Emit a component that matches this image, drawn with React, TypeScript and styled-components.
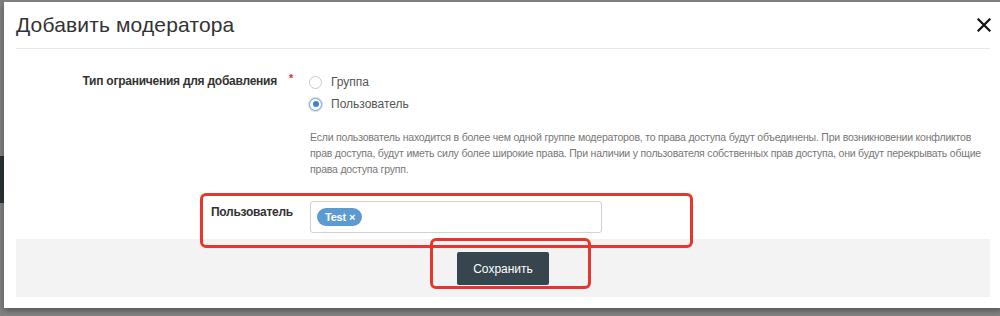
import React from "react";
import styled, { createGlobalStyle } from "styled-components";

const Global = createGlobalStyle`
  html, body { margin: 0; padding: 0; }
  body {
    width: 1000px;
    height: 316px;
    overflow: hidden;
    background: #848484;
    font-family: "Liberation Sans", Arial, sans-serif;
  }
`;

const Backdrop = styled.div`
  display: flex;
  width: 1000px;
  height: 316px;
  overflow: hidden;
`;

const PageEdge = styled.div`
  flex: 0 0 4px;
  display: flex;
  flex-direction: column;
`;

const EdgeBlock = styled.div<{ $h: number; $dark?: boolean }>`
  height: ${(p) => p.$h}px;
  background: ${(p) => (p.$dark ? "#2a3235" : "#808080")};
`;

const Modal = styled.div`
  position: relative;
  flex: 0 0 998px;
  align-self: flex-start;
  margin-top: 2px;
  background: #fff;
  padding: 0 12px 11px 12px;
  box-sizing: border-box;
  box-shadow: 0 3px 6px rgba(0, 0, 0, 0.35);
`;

const Header = styled.div`
  display: flex;
  align-items: center;
  justify-content: space-between;
  height: 46px;
  border-bottom: 1px solid #e8e8e8;
`;

const Title = styled.h4`
  margin: 0;
  font-size: 21px;
  font-weight: normal;
  color: #333;
  letter-spacing: 0.15px;
`;

const Close = styled.button`
  border: 0;
  background: none;
  padding: 0;
  width: 16px;
  height: 16px;
  display: flex;
  align-items: center;
  justify-content: center;
  margin-right: -2px;
`;

const Body = styled.div`
  padding-top: 22px;
  padding-bottom: 6px;
`;

const FormRow = styled.div<{ $mt?: number }>`
  display: grid;
  grid-template-columns: 277px 680px;
  column-gap: 17px;
  margin-top: ${(p) => p.$mt ?? 0}px;
`;

const Label = styled.div<{ $pt?: number }>`
  text-align: right;
  font-size: 12px;
  font-weight: bold;
  color: #333;
  line-height: 20px;
  letter-spacing: -0.25px;
  padding-top: ${(p) => p.$pt ?? 0}px;
`;

const Required = styled.span`
  color: #d9302c;
  margin-left: 12px;
  font-size: 11px;
  position: relative;
  top: -3px;
`;

const Options = styled.div`
  display: flex;
  flex-direction: column;
`;

const Option = styled.label`
  display: flex;
  align-items: center;
  height: 22px;
  font-size: 12px;
  color: #555;
`;

const Radio = styled.span<{ $checked?: boolean }>`
  box-sizing: border-box;
  width: 13px;
  height: 13px;
  border-radius: 50%;
  margin-left: -1px;
  margin-right: 9px;
  border: 1px solid ${(p) => (p.$checked ? "#7aa7d6" : "#c9c9c9")};
  background: #fff;
  display: flex;
  align-items: center;
  justify-content: center;
  box-shadow: ${(p) => (p.$checked ? "0 0 0 1px rgba(120,165,215,0.35)" : "none")};
  &::after {
    content: "";
    width: 6px;
    height: 6px;
    border-radius: 50%;
    background: ${(p) => (p.$checked ? "#3f83cc" : "transparent")};
  }
`;

const Help = styled.p`
  margin: 14px 0 0 0;
  font-size: 10.5px;
  letter-spacing: -0.2px;
  line-height: 16px;
  color: #777;
`;

const Select = styled.div`
  box-sizing: border-box;
  width: 292px;
  height: 32px;
  border: 1px solid #d2d2d2;
  border-radius: 3px;
  padding: 6px;
  display: flex;
  align-items: flex-start;
`;

const Tag = styled.span`
  display: inline-flex;
  align-items: center;
  gap: 3px;
  height: 18px;
  padding: 0 7px 0 8px;
  border-radius: 9px;
  background: #5b9bd1;
  color: #fff;
  font-size: 11px;
  font-weight: bold;
  letter-spacing: -0.2px;
`;

const TagX = styled.span`
  font-size: 11px;
  font-weight: bold;
`;

const Footer = styled.div`
  background: #f3f3f3;
  display: flex;
  justify-content: center;
  padding: 13px 0 12px;
`;

const SaveButton = styled.button`
  width: 92px;
  height: 33px;
  border: 0;
  border-radius: 2px;
  background: #37464e;
  color: #fff;
  font-family: "Liberation Sans", Arial, sans-serif;
  font-size: 12px;
`;

const Annotation = styled.div<{ $l: number; $t: number; $w: number; $h: number }>`
  position: absolute;
  left: ${(p) => p.$l}px;
  top: ${(p) => p.$t}px;
  width: ${(p) => p.$w}px;
  height: ${(p) => p.$h}px;
  box-sizing: border-box;
  border: 3px solid #e5372e;
  border-radius: 6px;
  pointer-events: none;
`;

export default function App() {
  return (
    <>
      <Global />
      <Backdrop>
        <PageEdge>
          <EdgeBlock $h={156} />
          <EdgeBlock $h={47} $dark />
          <EdgeBlock $h={113} />
        </PageEdge>
        <Modal>
          <Header>
            <Title>Добавить модератора</Title>
            <Close aria-label="Закрыть">
              <svg width="14" height="14" viewBox="0 0 14 14">
                <path d="M1.5 1.5 L12.5 12.5 M12.5 1.5 L1.5 12.5" stroke="#111" strokeWidth="2.2" strokeLinecap="square" />
              </svg>
            </Close>
          </Header>
          <Body>
            <FormRow>
              <Label>
                Тип ограничения для добавления<Required>*</Required>
              </Label>
              <div>
                <Options>
                  <Option>
                    <Radio />
                    Группа
                  </Option>
                  <Option>
                    <Radio $checked />
                    Пользователь
                  </Option>
                </Options>
                <Help>
                  Если пользователь находится в более чем одной группе модераторов, то права доступа будут объединены. При возникновении конфликтов прав доступа, будут иметь силу более широкие права. При наличии у пользователя собственных прав доступа, они будут перекрывать общие права доступа групп.
                </Help>
              </div>
            </FormRow>
            <FormRow $mt={24}>
              <Label $pt={1}>Пользователь</Label>
              <Select>
                <Tag>
                  Test<TagX>×</TagX>
                </Tag>
              </Select>
            </FormRow>
          </Body>
          <Footer>
            <SaveButton>Сохранить</SaveButton>
          </Footer>
          <Annotation $l={196} $t={191} $w={493} $h={55} />
          <Annotation $l={426} $t={236} $w={161} $h={51} />
        </Modal>
      </Backdrop>
    </>
  );
}
